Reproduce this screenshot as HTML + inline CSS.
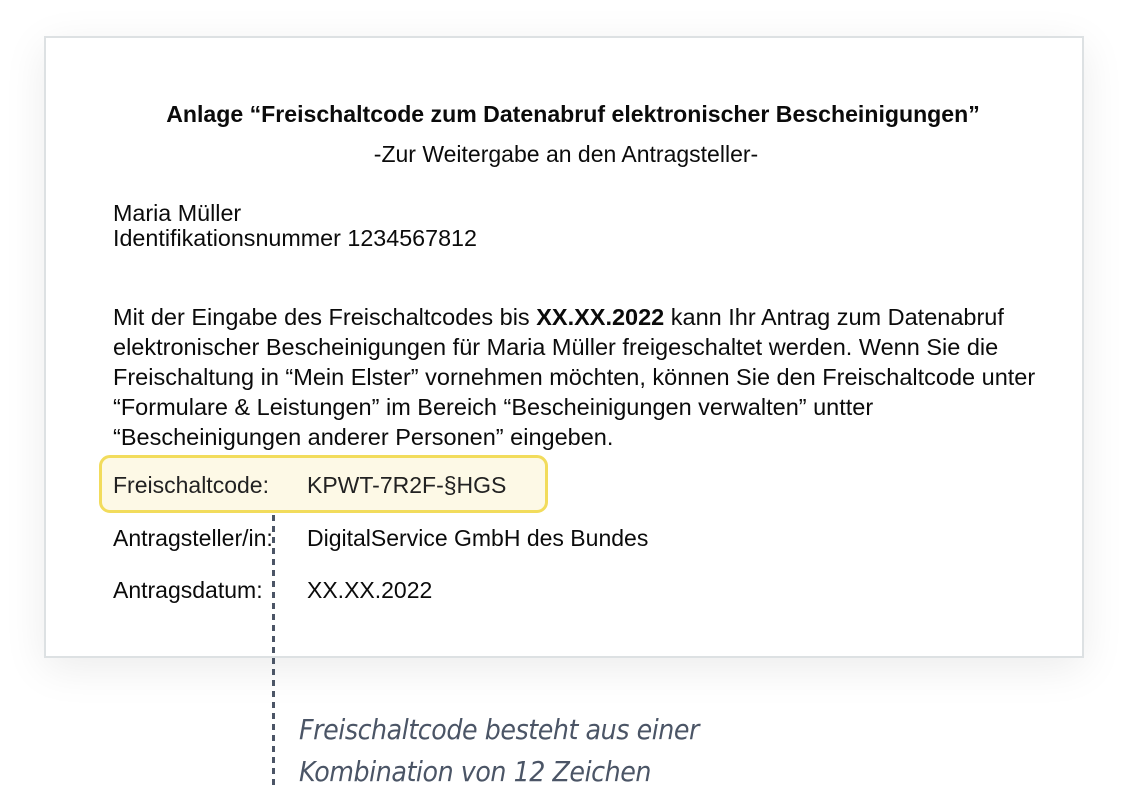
<!DOCTYPE html>
<html><head><meta charset="utf-8"><style>
*{margin:0;padding:0;box-sizing:border-box}
body{width:1128px;height:794px;background:#fff;position:relative;overflow:hidden;font-family:"Liberation Sans",sans-serif;color:#0b0b0b}
.card{position:absolute;left:44px;top:36px;width:1040px;height:622px;border:2px solid #dde1e3;background:#fff;box-shadow:0 10px 40px rgba(0,0,0,0.08)}
.t{position:absolute;white-space:nowrap;font-size:23px;line-height:24px}
.hl{position:absolute;left:99px;top:455px;width:449px;height:58px;border:3px solid #f2dc5c;border-radius:11px;background:#fdf9e6}
.dot{position:absolute;left:272px;top:515px;width:3px;height:272px;background:repeating-linear-gradient(#4b5566 0 6px,transparent 6px 11px)}
.cap{position:absolute;left:299px;font-style:italic;font-size:28px;line-height:32px;color:#4b5566;font-family:"DejaVu Sans","Liberation Sans",sans-serif;letter-spacing:-0.5px;transform:scaleX(0.905);transform-origin:left}
</style></head><body>
<div class="card"></div>
<div class="t" style="left:9px;width:1128px;text-align:center;top:102px;font-weight:bold;font-size:23.1px">Anlage “Freischaltcode zum Datenabruf elektronischer Bescheinigungen”</div>
<div class="t" style="left:2px;width:1128px;text-align:center;top:142px;font-size:23px">-Zur Weitergabe an den Antragsteller-</div>
<div class="t" style="left:113px;top:201px;line-height:25px;font-size:23.3px">Maria Müller<br>Identifikationsnummer 1234567812</div>
<div class="t" style="left:113px;top:302px;line-height:30px;font-size:23.5px">Mit der Eingabe des Freischaltcodes bis <b>XX.XX.2022</b> kann Ihr Antrag zum Datenabruf<br>elektronischer Bescheinigungen für Maria Müller freigeschaltet werden. Wenn Sie die<br>Freischaltung in “Mein Elster” vornehmen möchten, können Sie den Freischaltcode unter<br>“Formulare &amp; Leistungen” im Bereich “Bescheinigungen verwalten” untter<br>“Bescheinigungen anderer Personen” eingeben.</div>
<div class="hl"></div>
<div class="dot"></div>
<div class="t" style="left:113px;top:473px;color:#222">Freischaltcode:</div>
<div class="t" style="left:307px;top:473px;color:#222">KPWT-7R2F-§HGS</div>
<div class="t" style="left:113px;top:526px">Antragsteller/in:</div>
<div class="t" style="left:307px;top:526px">DigitalService GmbH des Bundes</div>
<div class="t" style="left:113px;top:578px">Antragsdatum:</div>
<div class="t" style="left:307px;top:578px">XX.XX.2022</div>
<div class="cap" style="top:714px">Freischaltcode besteht aus einer</div>
<div class="cap" style="top:756px">Kombination von 12 Zeichen</div>
</body></html>
